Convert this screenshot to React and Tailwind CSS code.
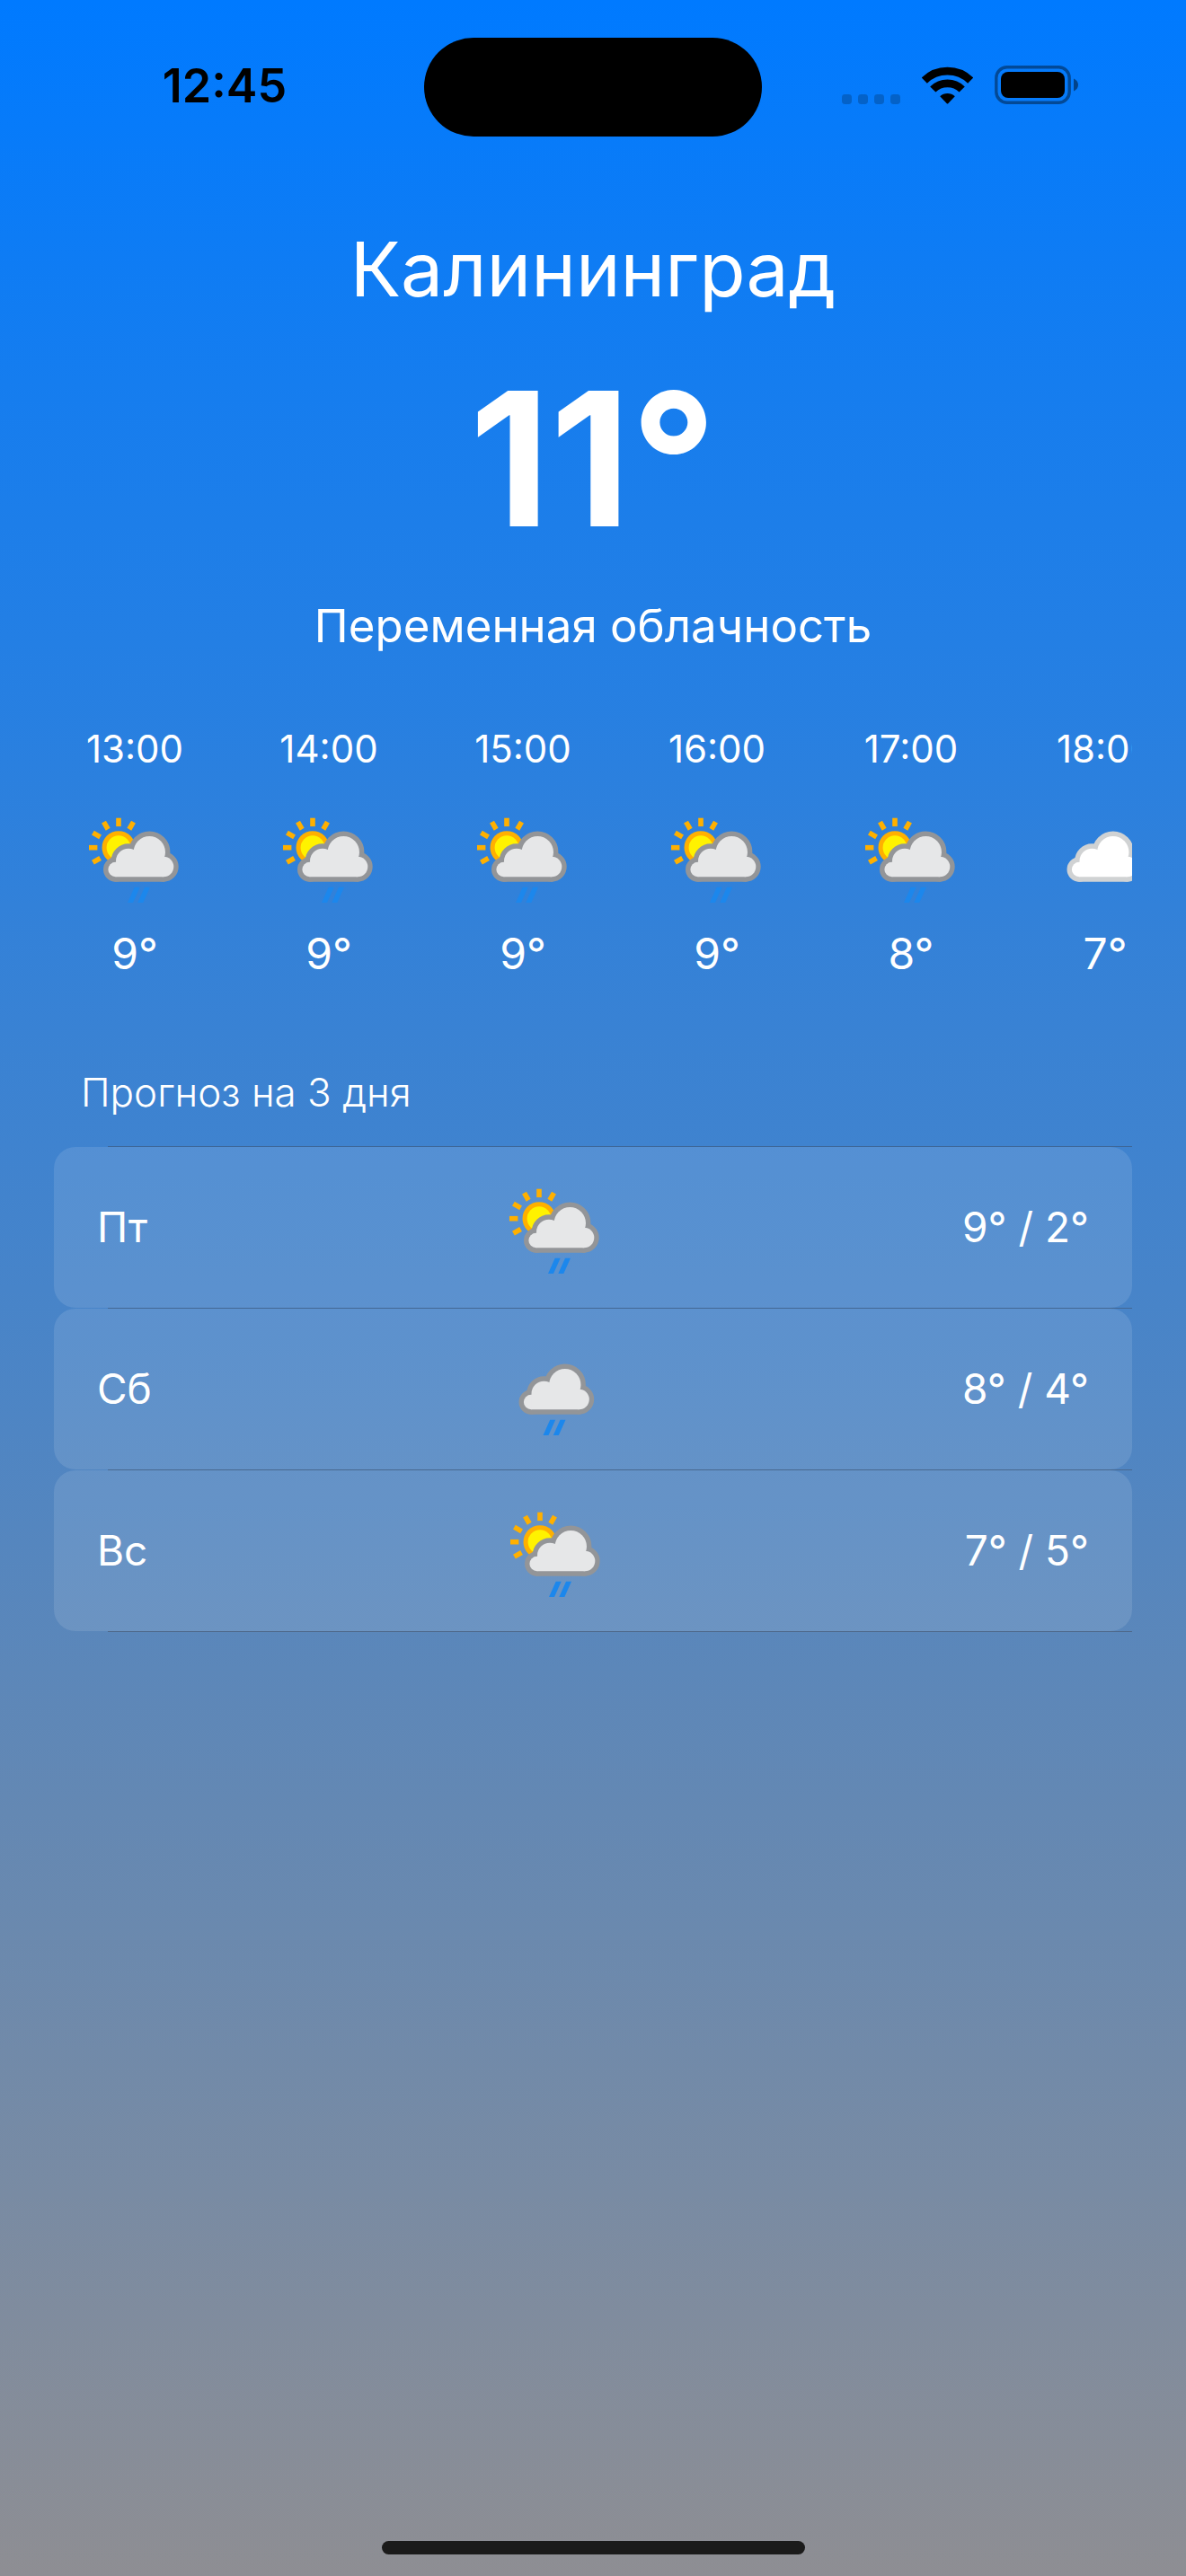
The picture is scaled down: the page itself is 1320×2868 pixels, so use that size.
import React from "react";

const hours = [
  { time: "13:00", temp: "9°", icon: "sunRain" },
  { time: "14:00", temp: "9°", icon: "sunRain" },
  { time: "15:00", temp: "9°", icon: "sunRain" },
  { time: "16:00", temp: "9°", icon: "sunRain" },
  { time: "17:00", temp: "8°", icon: "sunRain" },
  { time: "18:00", temp: "7°", icon: "cloud" },
];

const days = [
  { day: "Пт", range: "9° / 2°", icon: "sunRain" },
  { day: "Сб", range: "8° / 4°", icon: "rain" },
  { day: "Вс", range: "7° / 5°", icon: "sunRain" },
];

const RAY_ANGLES = [-120, -90, -60, -30, 0, 30];

function CloudShape() {
  return (
    <>
      <circle cx="38.7" cy="74" r="8.3" />
      <circle cx="53" cy="64.7" r="14" />
      <circle cx="76.3" cy="54.7" r="17.7" />
      <circle cx="92" cy="71" r="11.3" />
      <path d="M38.7 66 L53 60 H92 V82.3 H38.7 Z" />
    </>
  );
}

function WeatherIcon({ kind }) {
  const sunny = kind === "sunRain";
  const rainy = kind !== "cloud";
  const edge = rainy ? "#939598" : "#d0d2d3";
  const body = rainy ? "#e6e7e8" : "#ffffff";
  return (
    <svg viewBox="0 0 120 120" className="size-[120px] shrink-0" aria-hidden="true">
      {sunny && (
        <g>
          {RAY_ANGLES.map((a) => (
            <rect key={a} x="39.2" y="16.7" width="5.6" height="9.4" fill="#ffb000" transform={`rotate(${a} 42 49.7)`} />
          ))}
          <circle cx="42" cy="49.7" r="18.5" fill="#ffb000" />
          <circle cx="42" cy="49.7" r="13.4" fill="#fff200" />
        </g>
      )}
      <g transform={sunny ? undefined : "translate(-7.5 0)"}>
        <g fill={edge} stroke={edge} strokeWidth="10.8" strokeLinejoin="round">
          <CloudShape />
        </g>
        <g fill={body}>
          <CloudShape />
        </g>
        {rainy && (
          <path d="M59.7 93.7H65.7L58 111H52ZM71 93.7H77L69.3 111H63.3Z" fill="#1c87ec" />
        )}
      </g>
    </svg>
  );
}

function SignalDots() {
  return (
    <svg viewBox="0 0 65 11" className="h-[11px] w-[65px]" aria-hidden="true">
      {[0, 18, 36, 54].map((x) => (
        <rect key={x} x={x} width="11" height="11" rx="3.4" fill="#000" fillOpacity="0.2" />
      ))}
    </svg>
  );
}

function Wifi() {
  return (
    <svg viewBox="0 0 57 42" className="h-[42px] w-[57px]" aria-hidden="true">
      <g fill="none" stroke="#000" strokeWidth="8.8">
        <path d="M2.8 15.6A37 37 0 0 1 54.2 15.6" />
        <path d="M12.3 25.5A23 23 0 0 1 44.7 25.5" />
      </g>
      <path d="M20.2 33.2A12.4 12.4 0 0 1 36.8 33.2L29.2 41.2Q28.5 41.9 27.8 41.2Z" />
    </svg>
  );
}

function Battery() {
  return (
    <svg viewBox="0 0 93 43" className="h-[43px] w-[93px]" aria-hidden="true">
      <rect x="1.8" y="1.8" width="81.4" height="39.4" rx="12" fill="none" stroke="#000" strokeOpacity="0.4" strokeWidth="3.4" />
      <rect x="7" y="7" width="71" height="29" rx="8" />
      <path d="M88 14.5C91 15.7 93 18.4 93 21.5S91 27.3 88 28.5Z" fillOpacity="0.45" />
    </svg>
  );
}

export default function App() {
  return (
    <div className="flex min-h-screen flex-col bg-linear-to-b/srgb from-[#007aff] to-[#8e8e93] font-['Inter',sans-serif] text-white">
      <header className="grid grid-cols-[1fr_376px_1fr] items-center pt-[42px] text-black">
        <time className="pb-0.5 pl-7 text-center text-[52px] leading-none font-semibold">12:45</time>
        <div className="h-[110px] rounded-full bg-black" />
        <div className="flex items-end justify-center gap-6 pr-8 pb-1.5">
          <SignalDots />
          <Wifi />
          <Battery />
        </div>
      </header>

      <main className="px-[60px]">
        <section className="mt-[92px] flex flex-col items-center text-center">
          <h1 className="text-[84px] leading-[112px] font-normal">Калининград</h1>
          <p className="mt-[34px] text-[208px] leading-[240px] font-bold">11°</p>
          <p className="mt-[35px] text-[51px] leading-[64px]">Переменная облачность</p>
        </section>

        <ul className="mt-[79px] flex gap-9 overflow-hidden">
          {hours.map((h) => (
            <li key={h.time} className="flex w-[180px] shrink-0 flex-col items-center">
              <time className="text-[42px] leading-[52px]">{h.time}</time>
              <div className="mt-[34px]">
                <WeatherIcon kind={h.icon} />
              </div>
              <span className="mt-[18px] text-[48px] leading-[60px]">{h.temp}</span>
            </li>
          ))}
        </ul>

        <section className="mt-24">
          <h2 className="pl-[30px] text-[44px] leading-[56px] font-light">Прогноз на 3 дня</h2>
          <ul className="mt-8">
            {days.map((d) => (
              <li key={d.day}>
                <div className="ml-[60px] h-px bg-[#3c3c43]/40" />
                <div className="flex h-[179px] items-center justify-between rounded-3xl bg-white/11 px-12 text-[46px]">
                  <span>{d.day}</span>
                  <WeatherIcon kind={d.icon} />
                  <span>{d.range}</span>
                </div>
              </li>
            ))}
          </ul>
          <div className="ml-[60px] h-px bg-[#3c3c43]/40" />
        </section>
      </main>

      <footer className="mt-auto flex justify-center pb-6">
        <div className="h-[15px] w-[471px] rounded-full bg-[#1b1b1b]" />
      </footer>
    </div>
  );
}
